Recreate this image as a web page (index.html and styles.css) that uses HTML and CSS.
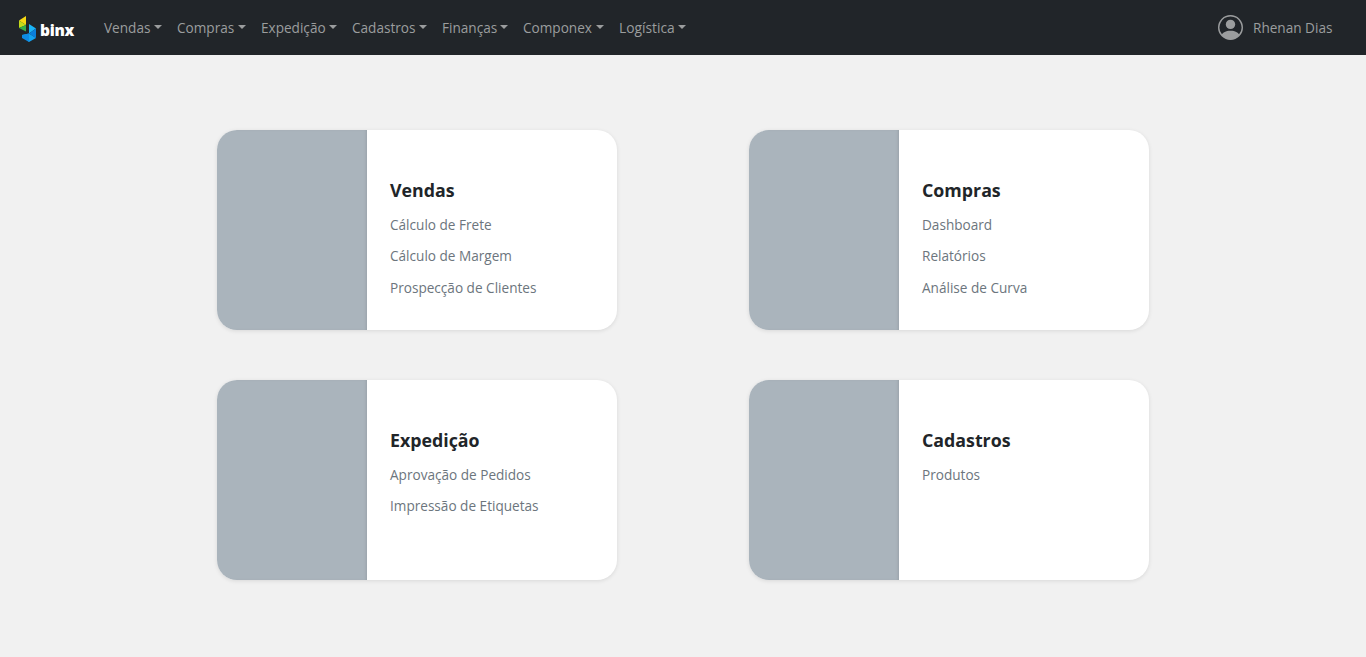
FILE: index.html
```html
<!DOCTYPE html>
<html lang="pt-BR">
<head>
<meta charset="utf-8">
<title>binx</title>
<link rel="stylesheet" href="styles.css">
</head>
<body>
<header class="navbar">
  <a class="brand">
    <svg class="brand-mark" width="19" height="29" viewBox="0 0 19 29"><path fill="#f6d813" d="M1 7.500L8 3v9z"/><path fill="#c3dc1a" d="M1 7.500L8 12l-7 3z"/><path fill="#35b04a" d="M1 15l7-3v6.500z"/><path fill="#1ab4f7" d="M11 11l7 4.500-7 5z"/><path fill="#0a7fdc" d="M18 15.500V25l-7-4.500z"/><path fill="#12a2f0" d="M4 22l7-1.500L18 25l-7 4z"/><path fill="#0e8be2" d="M4 22l7-1.500V29l-7-4z"/></svg>
    <span class="brand-name">binx</span>
  </a>
  <nav class="menu">
    <a class="menu-item w1">Vendas</a><a class="menu-item w2">Compras</a><a class="menu-item w3">Expedição</a><a class="menu-item w4">Cadastros</a><a class="menu-item w5">Finanças</a><a class="menu-item w6">Componex</a><a class="menu-item w7">Logística</a>
  </nav>
  <div class="user">
    <svg class="avatar" width="25" height="25" viewBox="0 0 16 16" fill="currentColor"><path d="M11 6a3 3 0 1 1-6 0 3 3 0 0 1 6 0z"/><path fill-rule="evenodd" d="M0 8a8 8 0 1 1 16 0A8 8 0 0 1 0 8zm8-7a7 7 0 0 0-5.468 11.37C3.242 11.226 4.805 10 8 10s4.757 1.225 5.468 2.37A7 7 0 0 0 8 1z"/></svg>
    <span class="user-name">Rhenan Dias</span>
  </div>
</header>
<main class="grid">
  <section class="card"><div class="thumb"></div><div class="body"><h2>Vendas</h2><a>Cálculo de Frete</a><a>Cálculo de Margem</a><a>Prospecção de Clientes</a></div></section>
  <section class="card"><div class="thumb"></div><div class="body"><h2>Compras</h2><a>Dashboard</a><a>Relatórios</a><a>Análise de Curva</a></div></section>
  <section class="card"><div class="thumb"></div><div class="body"><h2>Expedição</h2><a>Aprovação de Pedidos</a><a>Impressão de Etiquetas</a></div></section>
  <section class="card"><div class="thumb"></div><div class="body"><h2>Cadastros</h2><a>Produtos</a></div></section>
</main>
</body>
</html>
```
FILE: styles.css
```css
* { box-sizing: border-box; }
body { margin: 0; background: #f1f1f1; font-family: "Open Sans", "Noto Sans", sans-serif; }
.navbar { height: 55px; background: #212529; display: flex; align-items: center; padding: 0 34px 0 18px; color: #9b9d9e; font-size: 13.6px; }
.brand { display: flex; align-items: center; width: 86px; gap: 3px; }
.brand-name { font: 800 15.5px/20px "Open Sans", sans-serif; color: #fff; padding-top: 5px; letter-spacing: -0.3px; }
.menu { display: flex; }
.menu-item { display: flex; align-items: center; justify-content: space-between; white-space: nowrap; line-height: 20px; margin-right: 15px; }
.menu-item::after { content: ""; border: 4px solid transparent; border-top-color: currentColor; border-bottom: 0; margin-bottom: 2px; }
.w1 { width: 58px; }
.w2 { width: 69px; }
.w3 { width: 76px; }
.w4 { width: 75px; }
.w5 { width: 66px; }
.w6 { width: 81px; }
.w7 { width: 67px; font-size: 13.8px; }
.user { margin-left: auto; display: flex; align-items: center; gap: 10px; }
.user-name { width: 79px; white-space: nowrap; }
.grid { display: grid; grid-template-columns: 400px 400px; gap: 50px 132px; justify-content: center; padding: 75px 0 50px; }
.card { display: flex; height: 200px; background: #fff; border-radius: 20px; overflow: hidden; box-shadow: 0 1px 4px rgba(0,0,0,.1); }
.thumb { width: 150px; background: #aab4bc; box-shadow: inset -2px 0 3px -1px rgba(0,0,0,.1); }
.body { display: flex; flex-direction: column; padding: 47px 0 0 23px; }
.body h2 { margin: 0 0 11px; font-size: 17.8px; line-height: 26px; color: #212529; font-weight: 700; }
.body a { font-size: 13.6px; line-height: 21px; margin-bottom: 10.4px; color: #6c757d; }
```
